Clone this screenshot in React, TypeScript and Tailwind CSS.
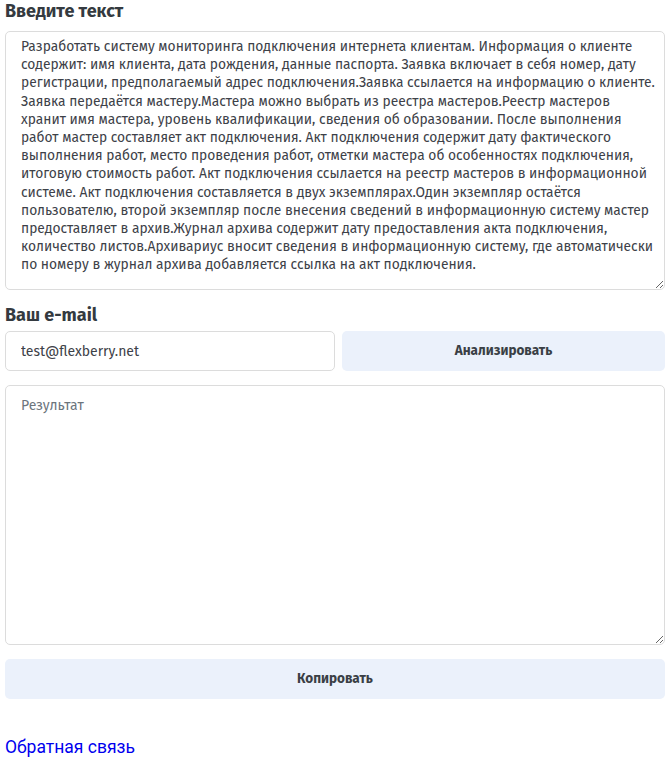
const LINES = [
  "Разработать систему мониторинга подключения интернета клиентам. Информация о клиенте",
  "содержит: имя клиента, дата рождения, данные паспорта. Заявка включает в себя номер, дату",
  "регистрации, предполагаемый адрес подключения.Заявка ссылается на информацию о клиенте.",
  "Заявка передаётся мастеру.Мастера можно выбрать из реестра мастеров.Реестр мастеров",
  "хранит имя мастера, уровень квалификации, сведения об образовании. После выполнения",
  "работ мастер составляет акт подключения. Акт подключения содержит дату фактического",
  "выполнения работ, место проведения работ, отметки мастера об особенностях подключения,",
  "итоговую стоимость работ. Акт подключения ссылается на реестр мастеров в информационной",
  "системе. Акт подключения составляется в двух экземплярах.Один экземпляр остаётся",
  "пользователю, второй экземпляр после внесения сведений в информационную систему мастер",
  "предоставляет в архив.Журнал архива содержит дату предоставления акта подключения,",
  "количество листов.Архивариус вносит сведения в информационную систему, где автоматически",
  "по номеру в журнал архива добавляется ссылка на акт подключения.",
];

const font = "font-['Fira_Sans','Roboto','Noto_Sans',sans-serif]";

const App = () => {
  return (
    <div className={`w-[670px] px-[5px] bg-white ${font} text-[#3a3f45]`}>
      <h2 className="text-[18px] font-bold leading-[22px] text-[#343a40] mb-[9px]">
        Введите текст
      </h2>
      <textarea
        wrap="off"
        defaultValue={LINES.join("\n")}
        className="block w-full h-[259px] overflow-hidden rounded-[5px] border border-[#dcdcdc] pl-[15px] pr-[2px] pt-[6px] text-[13.8px] leading-[18.2px] text-[#3d4148] outline-none resize-y"
      />
      <h2 className="text-[18px] font-bold leading-[22px] text-[#343a40] mt-[14px] mb-[5px]">
        Ваш e-mail
      </h2>
      <div className="flex gap-[7px]">
        <input
          defaultValue="test@flexberry.net"
          className="w-[330px] h-[40px] rounded-[5px] border border-[#dcdcdc] px-[15px] text-[14px] text-[#3d4148] outline-none"
        />
        <button className="flex-1 h-[40px] rounded-[5px] bg-[#ebf1fb] text-[13.5px] font-bold text-[#3a3f45]">
          Анализировать
        </button>
      </div>
      <textarea
        placeholder="Результат"
        className="block w-full h-[260px] mt-[14px] rounded-[5px] border border-[#dcdcdc] px-[15px] pt-[10px] text-[14px] leading-[20px] placeholder:text-[#6c757d] outline-none resize-y"
      />
      <button className="block w-full h-[40px] mt-[14px] rounded-[5px] bg-[#ebf1fb] text-[13.5px] font-bold text-[#3a3f45]">
        Копировать
      </button>
      <a href="#" className="block mt-[38px] text-[17.5px] text-[#0000ee] font-['Roboto',sans-serif] leading-[20px]">
        Обратная связь
      </a>
    </div>
  );
};

export default App;
